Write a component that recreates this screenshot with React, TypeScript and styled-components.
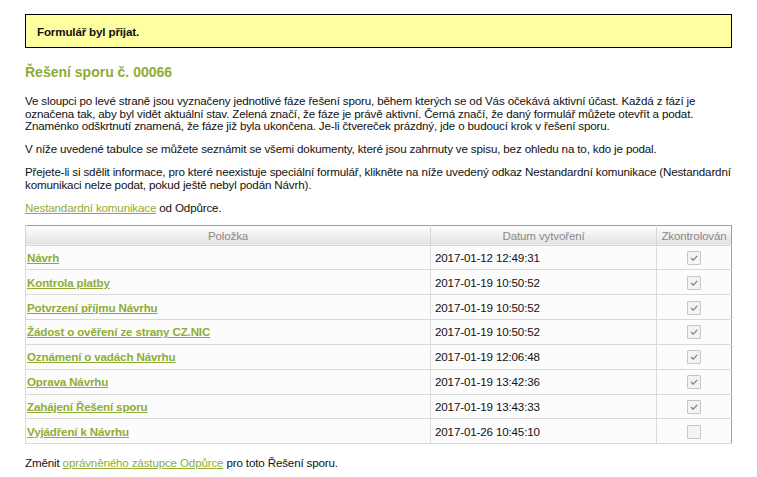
import React from "react";
import styled, { createGlobalStyle } from "styled-components";

const Global = createGlobalStyle`
  html, body { margin: 0; padding: 0; background: #fff; }
  body {
    font-family: "Liberation Sans", Arial, sans-serif;
    font-size: 11.6px;
    letter-spacing: -0.15px;
    color: #111;
  }
`;

const green = "#8fad35";

const Page = styled.div`
  min-height: 477px;
  padding: 14px 25px 0 25px;
  box-sizing: border-box;
  width: 758px;
  border-right: 1px solid #cfcfcf;
`;

const Notice = styled.div`
  height: 34px;
  box-sizing: border-box;
  border: 1px solid #000;
  background: #ffff9f;
  display: flex;
  align-items: center;
  padding-left: 11px;
  font-weight: bold;
  font-size: 11.6px;
`;

const Heading = styled.h2`
  margin: 16px 0 0 0;
  font-size: 14px;
  letter-spacing: 0;
  font-weight: bold;
  color: ${green};
  line-height: 16px;
`;

const Para = styled.p<{ $top: number }>`
  margin: ${(p) => p.$top}px 0 0 0;
  line-height: 12.5px;
`;

const Link = styled.a<{ $bold?: boolean }>`
  color: ${green};
  text-decoration: underline;
  font-weight: ${(p) => (p.$bold ? "bold" : "normal")};
  cursor: pointer;
`;

const Table = styled.table`
  margin-top: 10px;
  width: 707px;
  border-collapse: collapse;
  border: 1px solid #a0a0a0;
  table-layout: fixed;
`;

const Th = styled.th<{ $w?: number }>`
  width: ${(p) => (p.$w ? `${p.$w}px` : "auto")};
  height: 19px;
  padding: 0;
  font-weight: normal;
  color: #8a8a8a;
  text-align: center;
  background: linear-gradient(#ffffff, #e2e2e2);
  border-left: 1px solid #d6d6d6;
  border-bottom: 1px solid #d6d6d6;
  white-space: nowrap;
  overflow: hidden;
`;

const Tr = styled.tr`
  background: #fcfcfc;
`;

const Td = styled.td<{ $center?: boolean }>`
  height: 23.85px;
  padding: 0 0 0 ${(p) => (p.$center ? 0 : 4)}px;
  border-left: 1px solid #dadada;
  border-bottom: 1px solid #dadada;
  text-align: ${(p) => (p.$center ? "center" : "left")};
  vertical-align: middle;
  &:first-child { padding-left: 1px; }
`;

const Box = styled.span`
  display: inline-flex;
  align-items: center;
  justify-content: center;
  width: 12px;
  height: 12px;
  border: 1px solid #c6c6c6;
  border-radius: 1px;
  background: #f3f3f3;
  vertical-align: middle;
`;

function Check({ checked }: { checked: boolean }) {
  return (
    <Box>
      {checked && (
        <svg width="10" height="10" viewBox="0 0 10 10">
          <path d="M2 5 L4.2 7.2 L8.2 2.8" fill="none" stroke="#7d7d7d" strokeWidth="1.2" />
        </svg>
      )}
    </Box>
  );
}

const Footer = styled.p`
  margin: 12px 0 0 0;
  line-height: 14px;
`;

const rows: [string, string, boolean][] = [
  ["Návrh", "2017-01-12 12:49:31", true],
  ["Kontrola platby", "2017-01-19 10:50:52", true],
  ["Potvrzení příjmu Návrhu", "2017-01-19 10:50:52", true],
  ["Žádost o ověření ze strany CZ.NIC", "2017-01-19 10:50:52", true],
  ["Oznámení o vadách Návrhu", "2017-01-19 12:06:48", true],
  ["Oprava Návrhu", "2017-01-19 13:42:36", true],
  ["Zahájení Řešení sporu", "2017-01-19 13:43:33", true],
  ["Vyjádření k Návrhu", "2017-01-26 10:45:10", false],
];

export default function App() {
  return (
    <>
      <Global />
      <Page>
        <Notice>Formulář byl přijat.</Notice>
        <Heading>Řešení sporu č. 00066</Heading>
        <Para $top={15}>
          Ve sloupci po levé straně jsou vyznačeny jednotlivé fáze řešení sporu, během kterých se od Vás očekává aktivní účast. Každá z fází je
          označena tak, aby byl vidět aktuální stav. Zelená značí, že fáze je právě aktivní. Černá značí, že daný formulář můžete otevřít a podat.
          Znaménko odškrtnutí znamená, že fáze již byla ukončena. Je-li čtvereček prázdný, jde o budoucí krok v řešení sporu.
        </Para>
        <Para $top={10}>
          V níže uvedené tabulce se můžete seznámit se všemi dokumenty, které jsou zahrnuty ve spisu, bez ohledu na to, kdo je podal.
        </Para>
        <Para $top={11}>
          Přejete-li si sdělit informace, pro které neexistuje speciální formulář, klikněte na níže uvedený odkaz Nestandardní komunikace (Nestandardní
          komunikaci nelze podat, pokud ještě nebyl podán Návrh).
        </Para>
        <Para $top={11}>
          <Link>Nestandardní komunikace</Link> od Odpůrce.
        </Para>
        <Table>
          <thead>
            <tr>
              <Th $w={404}>Položka</Th>
              <Th $w={225}>Datum vytvoření</Th>
              <Th>Zkontrolován</Th>
            </tr>
          </thead>
          <tbody>
            {rows.map(([name, date, done]) => (
              <Tr key={name}>
                <Td>
                  <Link $bold>{name}</Link>
                </Td>
                <Td>{date}</Td>
                <Td $center>
                  <Check checked={done} />
                </Td>
              </Tr>
            ))}
          </tbody>
        </Table>
        <Footer>
          Změnit <Link>oprávněného zástupce Odpůrce</Link> pro toto Řešení sporu.
        </Footer>
      </Page>
    </>
  );
}
